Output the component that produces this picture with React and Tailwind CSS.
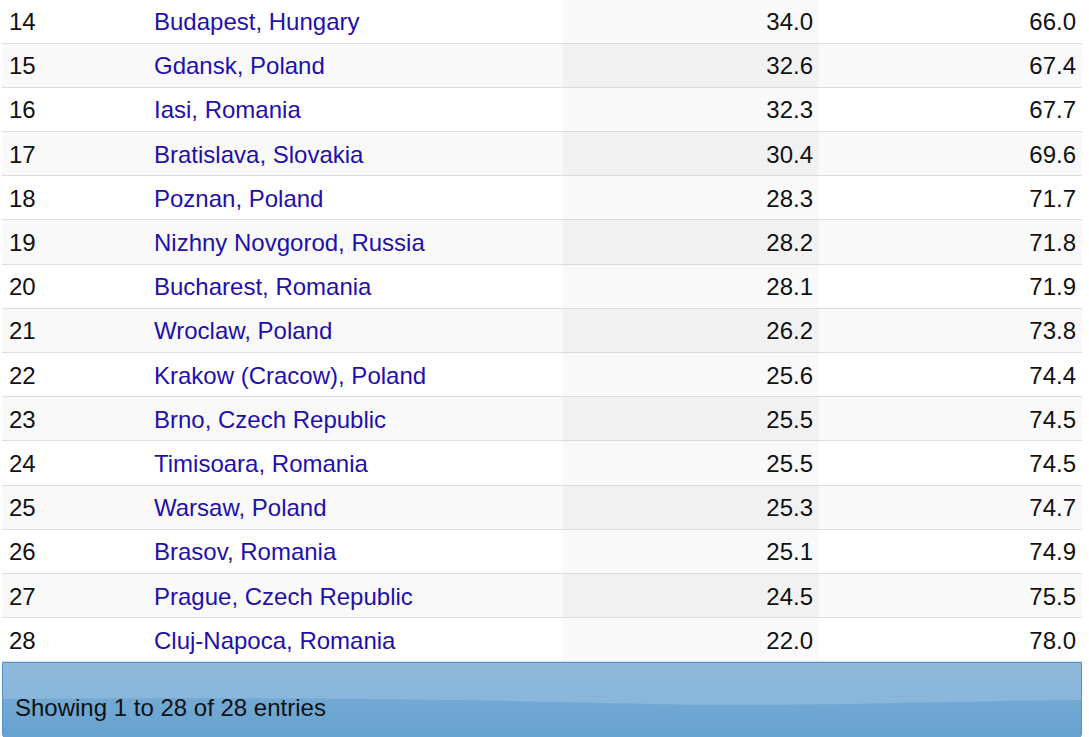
import React from 'react';

const rows = [
    [14, 'Budapest, Hungary', '34.0', '66.0'],
    [15, 'Gdansk, Poland', '32.6', '67.4'],
    [16, 'Iasi, Romania', '32.3', '67.7'],
    [17, 'Bratislava, Slovakia', '30.4', '69.6'],
    [18, 'Poznan, Poland', '28.3', '71.7'],
    [19, 'Nizhny Novgorod, Russia', '28.2', '71.8'],
    [20, 'Bucharest, Romania', '28.1', '71.9'],
    [21, 'Wroclaw, Poland', '26.2', '73.8'],
    [22, 'Krakow (Cracow), Poland', '25.6', '74.4'],
    [23, 'Brno, Czech Republic', '25.5', '74.5'],
    [24, 'Timisoara, Romania', '25.5', '74.5'],
    [25, 'Warsaw, Poland', '25.3', '74.7'],
    [26, 'Brasov, Romania', '25.1', '74.9'],
    [27, 'Prague, Czech Republic', '24.5', '75.5'],
    [28, 'Cluj-Napoca, Romania', '22.0', '78.0'],
];

export default function App() {
    return (
        <div className="w-[1089px] h-[737px] overflow-hidden bg-white text-[24px] text-[#111]" style={{ fontFamily: '"Liberation Sans", Arial, sans-serif' }}>
            <div className="mt-[-1px] ml-[2px] w-[1080px]">
                <table className="w-full border-collapse table-fixed">
                    <colgroup>
                        <col className="w-[145px]" />
                        <col className="w-[416px]" />
                        <col className="w-[256px]" />
                        <col className="w-[263px]" />
                    </colgroup>
                    <tbody>
                        {rows.map((r, i) => {
                            const odd = i % 2 === 0;
                            return (
                                <tr key={r[0]} className={`h-[44.2px] border-b border-[#dddddd] ${odd ? 'bg-white' : 'bg-[#f9f9f9]'}`}>
                                    <td className="px-[7px] pt-[2px] pb-0 leading-none">{r[0]}</td>
                                    <td className="px-[7px] pt-[2px] pb-0 leading-none text-[#1f0fab]">{r[1]}</td>
                                    <td className={`px-[6px] pt-[2px] pb-0 leading-none text-right ${odd ? 'bg-[#f9f9f9]' : 'bg-[#f1f1f1]'}`}>{r[2]}</td>
                                    <td className="px-[6px] pt-[2px] pb-0 leading-none text-right">{r[3]}</td>
                                </tr>
                            );
                        })}
                    </tbody>
                </table>

                <div className="relative h-[76px] border border-[#4d92d1] rounded-b-[4px] overflow-hidden bg-gradient-to-b from-[#8cb9dc] to-[#86b4d9]">
                    <svg className="absolute inset-0" width="1080" height="76" viewBox="0 0 1080 76" preserveAspectRatio="none">
                        <defs>
                            <linearGradient id="lower" x1="0" y1="0" x2="0" y2="1">
                                <stop offset="0" stopColor="#73a9d4" />
                                <stop offset="1" stopColor="#67a2d0" />
                            </linearGradient>
                        </defs>
                        <path d="M0 36 C 250 34, 450 36, 650 41 C 800 44, 950 38, 1080 37 L 1080 76 L 0 76 Z" fill="url(#lower)" />
                    </svg>
                    <div className="relative h-full flex items-center pl-[12px] pt-[16px] text-[#111]">
                        Showing 1 to 28 of 28 entries
                    </div>
                </div>
            </div>
        </div>
    );
}
